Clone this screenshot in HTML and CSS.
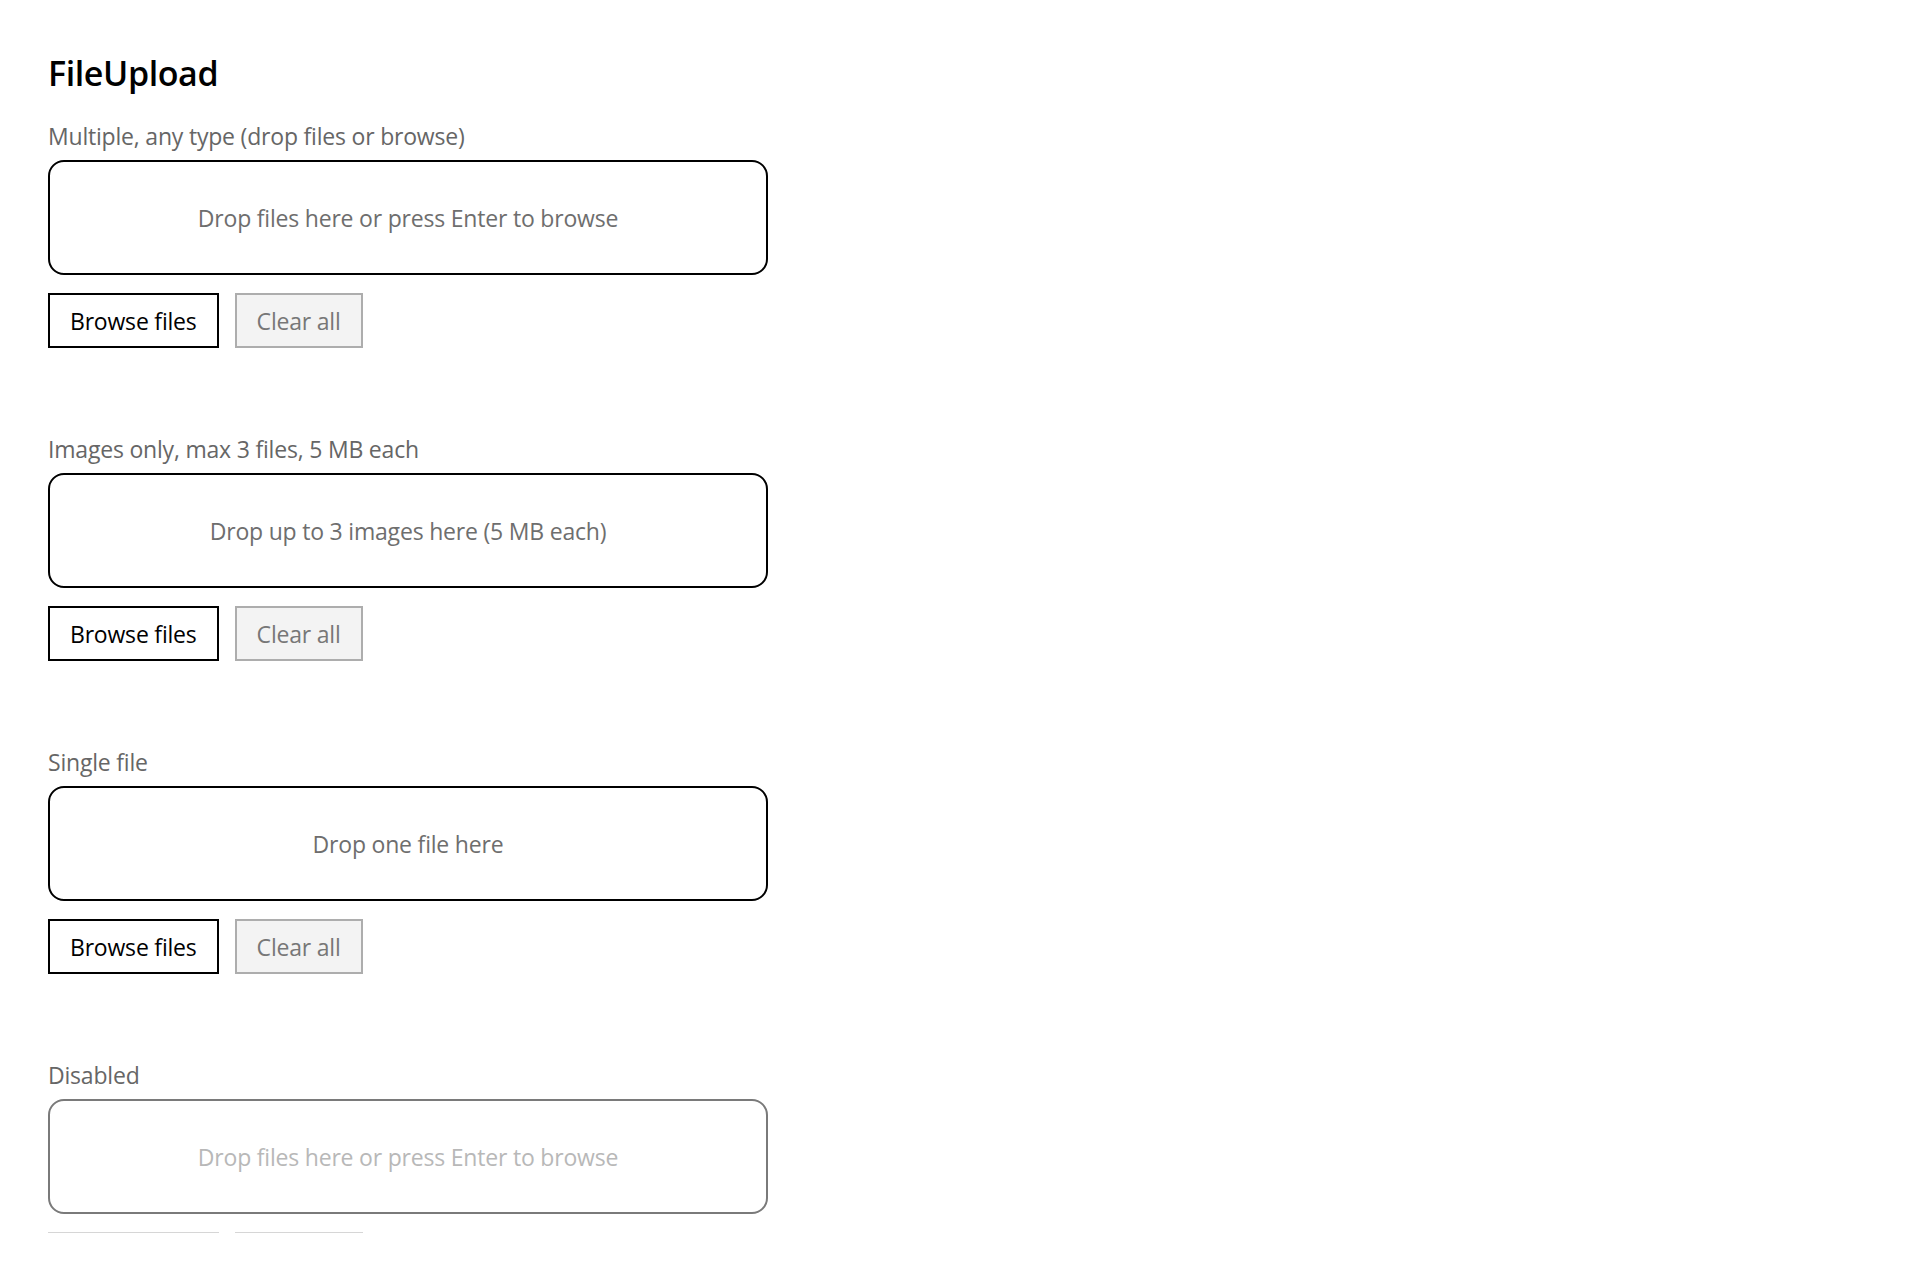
FILE: index.html
```html
<!DOCTYPE html>
<html>
<head>
    <meta charset="utf-8">
    <title>FileUpload</title>
    <link rel="stylesheet" href="styles.css">
</head>
<body>
    <main class="page">
        <div class="page-inner">
            <h1 class="page-title">FileUpload</h1>

            <section class="demo">
                <div class="demo-label">Multiple, any type (drop files or browse)</div>
                <div class="dropzone" tabindex="0">Drop files here or press Enter to browse</div>
                <div class="actions">
                    <button class="btn btn-browse">Browse files</button>
                    <button class="btn btn-clear">Clear all</button>
                </div>
            </section>

            <section class="demo">
                <div class="demo-label">Images only, max 3 files, 5 MB each</div>
                <div class="dropzone" tabindex="0">Drop up to 3 images here (5 MB each)</div>
                <div class="actions">
                    <button class="btn btn-browse">Browse files</button>
                    <button class="btn btn-clear">Clear all</button>
                </div>
            </section>

            <section class="demo">
                <div class="demo-label">Single file</div>
                <div class="dropzone" tabindex="0">Drop one file here</div>
                <div class="actions">
                    <button class="btn btn-browse">Browse files</button>
                    <button class="btn btn-clear">Clear all</button>
                </div>
            </section>

            <section class="demo demo-disabled">
                <div class="demo-label">Disabled</div>
                <div class="dropzone">Drop files here or press Enter to browse</div>
                <div class="actions">
                    <button class="btn btn-browse" disabled>Browse files</button>
                    <button class="btn btn-clear" disabled>Clear all</button>
                </div>
            </section>
        </div>
    </main>
</body>
</html>
```

FILE: styles.css
```css
:root {
    --text: #000;
    --muted: #666;
    --hint: #6e6e6e;
    --line: #000;
    --line-soft: #adadad;
    --disabled-line: #7a7a7a;
    --disabled-text: #b8b8b8;
}

html, body {
    margin: 0;
    background: #fff;
}

body {
    font-family: "Open Sans", "Noto Sans", sans-serif;
    font-size: 23px;
    letter-spacing: -0.2px;
    color: var(--text);
}

.page {
    box-sizing: border-box;
    height: 100vh;
    padding: 48px 48px 47px;
}

.page-inner {
    height: 100%;
    overflow: hidden;
}

.page-title {
    font-size: 34px;
    font-weight: 600;
    letter-spacing: -0.4px;
    line-height: 1.3;
    margin: 3px 0 24px;
}

.demo {
    width: 720px;
    margin-bottom: 84px;
}

.demo-label {
    color: var(--muted);
    line-height: 34px;
    margin-bottom: 7px;
}

.dropzone {
    box-sizing: border-box;
    height: 115px;
    border: 2px solid var(--line);
    border-radius: 16px;
    display: flex;
    align-items: center;
    justify-content: center;
    color: var(--hint);
    outline: none;
}

.actions {
    display: flex;
    gap: 16px;
    margin-top: 18px;
}

.btn {
    box-sizing: border-box;
    height: 55px;
    padding: 0 20px;
    font: inherit;
    letter-spacing: inherit;
    border: 2px solid var(--line);
    background: #fff;
    color: var(--text);
    border-radius: 0;
    cursor: pointer;
}

.btn-clear {
    border-color: var(--line-soft);
    background: #f3f3f3;
    color: #777;
}

/* disabled demo */
.demo-disabled .dropzone {
    border-color: var(--disabled-line);
    color: var(--disabled-text);
}

.btn:disabled {
    border-color: #d6d6d6;
    background: #fff;
    color: #c4c4c4;
    cursor: default;
}
```
